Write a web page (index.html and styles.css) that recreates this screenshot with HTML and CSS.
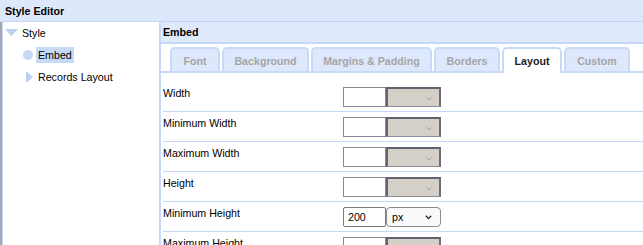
FILE: index.html
```html
<!DOCTYPE html>
<html>
<head>
<meta charset="utf-8">
<title>Style Editor</title>
<link rel="stylesheet" href="styles.css">
</head>
<body>
<div class="app">
  <div class="titlebar">Style Editor</div>
  <div class="main">
    <div class="tree">
      <div class="node node-root">
        <svg class="tri-down" width="13" height="7" viewBox="0 0 13 7"><polygon points="0,0 13,0 6.5,7" fill="#bcd0f3"/></svg>
        <span class="node-text">Style</span>
      </div>
      <div class="node node-leaf">
        <span class="dot"></span>
        <span class="node-text selected">Embed</span>
      </div>
      <div class="node node-closed">
        <svg class="tri-right" width="7" height="12" viewBox="0 0 7 12"><polygon points="0,0 7,6 0,12" fill="#bcd0f3"/></svg>
        <span class="node-text">Records Layout</span>
      </div>
    </div>
    <div class="panel">
      <div class="panel-head">Embed</div>
      <div class="tabs">
        <div class="tab t-font">Font</div>
        <div class="tab t-bg">Background</div>
        <div class="tab t-margins">Margins &amp; Padding</div>
        <div class="tab t-borders">Borders</div>
        <div class="tab t-layout active">Layout</div>
        <div class="tab t-custom">Custom</div>
      </div>
      <div class="rows">
        <div class="row">
          <div class="label">Width</div>
          <div class="field"><input class="num" type="text" value=""><div class="sel disabled"><span></span><svg width="6" height="4" viewBox="0 0 6 4"><polyline points="0.5,0.5 3,3 5.5,0.5" fill="none" stroke="#a39f97" stroke-width="1"/></svg></div></div>
        </div>
        <div class="row">
          <div class="label">Minimum Width</div>
          <div class="field"><input class="num" type="text" value=""><div class="sel disabled"><span></span><svg width="6" height="4" viewBox="0 0 6 4"><polyline points="0.5,0.5 3,3 5.5,0.5" fill="none" stroke="#a39f97" stroke-width="1"/></svg></div></div>
        </div>
        <div class="row">
          <div class="label">Maximum Width</div>
          <div class="field"><input class="num" type="text" value=""><div class="sel disabled"><span></span><svg width="6" height="4" viewBox="0 0 6 4"><polyline points="0.5,0.5 3,3 5.5,0.5" fill="none" stroke="#a39f97" stroke-width="1"/></svg></div></div>
        </div>
        <div class="row">
          <div class="label">Height</div>
          <div class="field"><input class="num" type="text" value=""><div class="sel disabled"><span></span><svg width="6" height="4" viewBox="0 0 6 4"><polyline points="0.5,0.5 3,3 5.5,0.5" fill="none" stroke="#a39f97" stroke-width="1"/></svg></div></div>
        </div>
        <div class="row">
          <div class="label">Minimum Height</div>
          <div class="field"><input class="num enabled" type="text" value="200"><div class="sel enabled"><span>px</span><svg width="7" height="5" viewBox="0 0 7 5"><polyline points="0.8,0.8 3.5,3.6 6.2,0.8" fill="none" stroke="#222" stroke-width="1.3"/></svg></div></div>
        </div>
        <div class="row">
          <div class="label">Maximum Height</div>
          <div class="field"><input class="num" type="text" value=""><div class="sel disabled"><span></span><svg width="6" height="4" viewBox="0 0 6 4"><polyline points="0.5,0.5 3,3 5.5,0.5" fill="none" stroke="#a39f97" stroke-width="1"/></svg></div></div>
        </div>
      </div>
    </div>
  </div>
</div>
</body>
</html>
```

FILE: styles.css
```css
html, body {
  margin: 0;
  padding: 0;
  background: #ffffff;
}
body {
  font-family: "Liberation Sans", Arial, sans-serif;
  font-size: 8pt;
  color: #000;
  overflow: hidden;
}
.app {
  width: 643px;
  height: 245px;
  display: flex;
  flex-direction: column;
  overflow: hidden;
}
.titlebar {
  height: 21px;
  line-height: 22px;
  flex: 0 0 auto;
  padding-left: 5px;
  background: #dde8fc;
  border-bottom: 1px solid #c3d5f5;
  font-weight: bold;
  color: #000;
}
.main {
  flex: 1 1 auto;
  display: flex;
  min-height: 0;
}
.tree {
  width: 157px;
  flex: 0 0 auto;
  border-left: 2px solid #a3a8b3;
  box-shadow: inset 1px 0 0 #c7d7f5;
  background: #fff;
}
.node {
  height: 22px;
  display: flex;
  align-items: center;
}
.node-root {
  padding-left: 3px;
}
.node-root .tri-down {
  margin-right: 4px;
  margin-top: -2px;
}
.node-leaf {
  padding-left: 21px;
}
.dot {
  width: 10px;
  height: 10px;
  border-radius: 50%;
  background: #c6d8f6;
  margin-right: 3px;
}
.node-text.selected {
  background: #c6d9f7;
  padding: 0 2px;
  line-height: 16px;
  margin-top: -1px;
}
.node-closed {
  padding-left: 24px;
}
.tri-right {
  margin-right: 5px;
}
.panel {
  flex: 1 1 auto;
  border-left: 2px solid #c8daf8;
  display: flex;
  flex-direction: column;
  min-width: 0;
}
.panel-head {
  height: 20px;
  line-height: 20px;
  padding-left: 2px;
  background: #dfe9fc;
  border-bottom: 2px solid #c6d8f7;
  font-weight: bold;
}
.tabs {
  display: flex;
  align-items: flex-end;
  padding: 3px 0 0 9px;
  border-bottom: 2px solid #c8daf8;
  height: 24px;
}
.tab {
  box-sizing: border-box;
  height: 24px;
  margin-right: 2px;
  padding-top: 5px;
  line-height: 14px;
  text-align: center;
  font-weight: bold;
  color: #a5a5a5;
  background: #dde8fc;
  border: 2px solid #c8daf8;
  border-bottom: none;
  border-radius: 5px 5px 0 0;
}
.tab.active {
  background: #fff;
  color: #1c1c1c;
  height: 26px;
  margin-bottom: -2px;
}
.t-font { width: 50px; }
.t-bg { width: 87px; }
.t-margins { width: 121px; }
.t-borders { width: 66px; }
.t-layout { width: 60px; }
.t-custom { width: 66px; }
.rows {
  padding-top: 9px;
  margin-left: 2px;
}
.row {
  height: 29px;
  display: flex;
  align-items: flex-start;
  border-bottom: 1px solid #c5d7f7;
}
.label {
  width: 180px;
  padding-top: 4px;
  line-height: 14px;
}
.field {
  display: flex;
  margin-top: 5px;
}
.num {
  box-sizing: border-box;
  width: 43px;
  height: 20px;
  margin: 0;
  padding: 0 0 0 4px;
  border: 1px solid #8a8793;
  background: #fff;
  font-family: "Liberation Sans", Arial, sans-serif;
  font-size: 8pt;
  color: #000;
  outline: none;
}
.num.enabled {
  border-color: #7a7a7a;
  border-radius: 2px;
}
.sel {
  box-sizing: border-box;
  width: 55px;
  height: 20px;
  display: flex;
  align-items: center;
  justify-content: space-between;
  font-size: 8pt;
}
.sel.disabled {
  background: #d4d0c8;
  border-top: 2px solid #636270;
  border-left: 2px solid #636270;
  border-right: 2px solid #6e6d79;
  border-bottom: 1px solid #8f8d96;
  padding: 0 7px 0 4px;
}
.sel.disabled svg {
  margin-top: 2px;
}
.sel.enabled {
  background: #f9f9f9;
  border: 1px solid #8b8b8b;
  border-radius: 4px;
  padding: 0 8px 0 5px;
}
```
